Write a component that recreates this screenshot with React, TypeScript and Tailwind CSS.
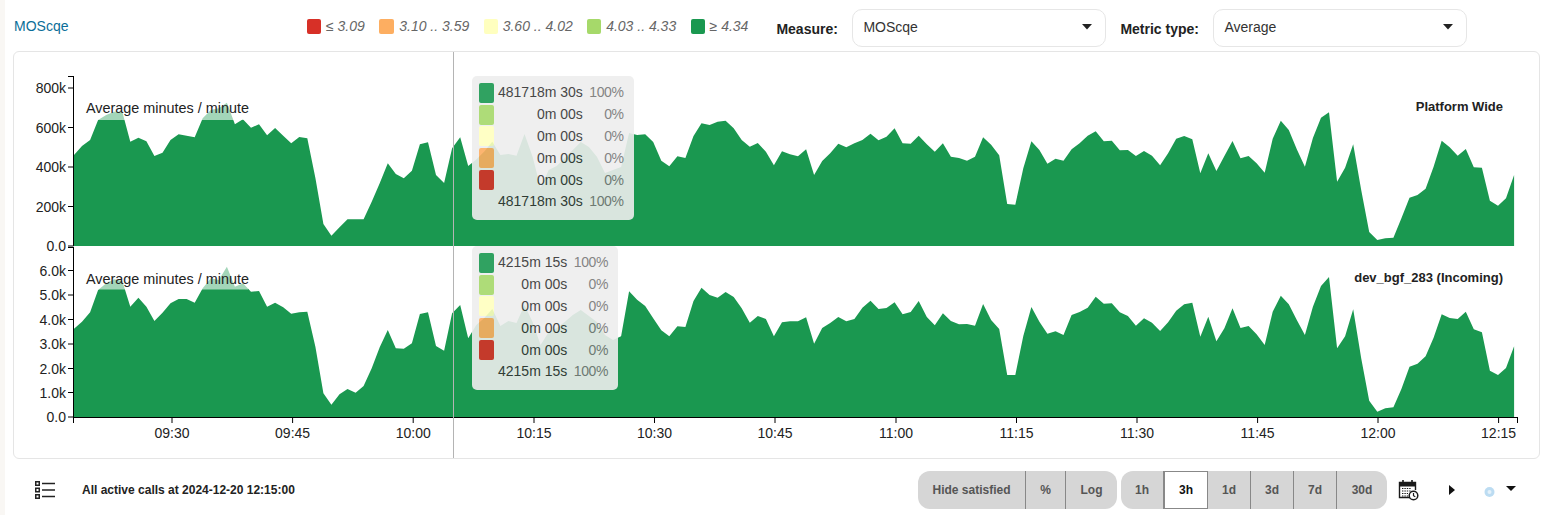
import React from 'react';

const STEP = 8.045;
const LEFT = 74;

// y positions of the samples, one per minute
const platformY = [
  155, 146, 140, 120, 115, 111.7, 111.7, 141.7, 137.7, 141.3, 156, 152.7, 140, 134.3, 135.7, 137.3, 118.3, 110, 108.3, 102.7,
  124.3, 119.3, 127.7, 124.3, 135.3, 128, 135.7, 143.3, 137, 138.3, 178, 224, 235.7, 227.3, 219.3, 219.3, 219.3, 201.7, 183.3, 163.3,
  174, 178.3, 170.7, 144.3, 142.3, 175, 183, 148.3, 137.3, 166, 159.5, 151.5, 141.7, 155, 154, 155.7, 134, 156.7, 188, 170,
  166, 158, 150, 142, 147, 156.7, 173, 170, 167, 133, 135, 134.3, 142, 160.7, 166.3, 156.3, 158, 136, 123.3, 125,
  121.7, 120.7, 128.3, 140, 146.7, 143, 151.7, 165.3, 151.3, 154.3, 156.3, 149.3, 175, 161, 153.3, 143.7, 147.3, 143.3, 140, 133.7,
  140.3, 136.7, 128.3, 143.3, 143.7, 135.7, 144.3, 151.7, 143.3, 156.7, 158, 160.7, 156.7, 137.3, 144.7, 155.3, 204, 204.7, 168.3, 141.3,
  150, 163.7, 158.7, 160.7, 149.3, 143.3, 135.7, 131.3, 141.3, 140.7, 150.3, 150, 156, 151, 155.7, 165.3, 153.3, 138.7, 136, 139.3,
  173.3, 153.3, 171, 156, 141, 158.3, 156, 163.3, 172.7, 138.7, 120.7, 130, 149.3, 166.7, 138, 117.7, 112.3, 181.7, 167.7, 144.3,
  190, 232, 240, 238.3, 237.7, 218.3, 197.7, 195, 188.7, 166.7, 140.7, 147.3, 155.7, 149, 167.3, 167.7, 200.7, 205.7, 198.3, 175,
];

const incomingY = [
  328.7, 321.7, 312.3, 290, 283.3, 279.3, 281, 306.7, 297.7, 306.7, 321, 312.7, 303.3, 299, 299, 302.7, 288.3, 278.3, 280, 266.7,
  286.7, 283.3, 291.7, 291, 306.7, 302.7, 307.3, 313.7, 312.3, 311.7, 346.7, 393.3, 404.7, 394.3, 389, 392.7, 386, 368.3, 347.3, 330,
  348.3, 348.7, 343.3, 314, 312.3, 346, 350.7, 313.3, 305, 338.3, 325, 318, 309, 326, 321, 323, 305, 322, 345, 332,
  328, 322, 315, 310, 316, 322, 335, 340, 336.3, 291.3, 299.7, 306, 318.3, 330.3, 336.3, 326.3, 327, 301, 287.7, 295,
  297.7, 292, 297, 308.3, 322.7, 316, 319, 336.3, 322.3, 321.3, 321.3, 317.3, 343.7, 328, 323, 317, 321.3, 319, 307.7, 300.7,
  309, 308, 302.3, 314.3, 312, 301, 317, 325.3, 313.3, 321, 324.3, 324, 325.7, 304, 320, 329, 375, 375, 336, 307,
  321.7, 333.7, 331.3, 335, 315, 312, 307.7, 296.7, 303.7, 303.3, 312.3, 316, 325.7, 318.3, 322.7, 331, 322.3, 310.7, 304.3, 302.7,
  336.7, 316.7, 341.3, 328.3, 308.3, 328, 326, 334.3, 345, 311.7, 295.7, 304.3, 320, 335, 306.7, 286, 277, 348.3, 336.3, 309.3,
  358.3, 400.7, 411.7, 408.3, 407.3, 389, 366.7, 363.7, 356.3, 337.7, 314.3, 318, 319, 311.7, 329.3, 332.3, 370.7, 375, 368, 346.3,
];

const timeTicks = [
  ['09:30', 172], ['09:45', 292.6], ['10:00', 413.2], ['10:15', 534], ['10:30', 654.5], ['10:45', 775],
  ['11:00', 896], ['11:15', 1016.5], ['11:30', 1137], ['11:45', 1257.6], ['12:00', 1378], ['12:15', 1498.6],
] as const;

const legend = [
  { label: '≤ 3.09', cls: 'w-[14px] bg-[#d73027]' },
  { label: '3.10 .. 3.59', cls: 'w-[15px] bg-[#fdae61]' },
  { label: '3.60 .. 4.02', cls: 'w-[14px] bg-[#ffffbf]' },
  { label: '4.03 .. 4.33', cls: 'w-[14px] bg-[#a6d96a]' },
  { label: '≥ 4.34', cls: 'w-[14px] bg-[#1a9850]' },
];

interface AreaChartProps {
  ys: number[];
  top: number;
  height: number;
  baseline: number;
  axisTop: number;
  ticks: [string, number][];
  title: string;
  titleY: number;
  unitY: number;
  bandY: number;
  bandH: number;
  withTimeAxis?: boolean;
}

// the svg uses page coordinates, so viewBox starts where the panel starts
function AreaChart({ ys, top, height, baseline, axisTop, ticks, title, titleY, unitY, bandY, bandH, withTimeAxis }: AreaChartProps) {
  const line = ys.map((y, i) => `${(LEFT + i * STEP).toFixed(1)},${y}`).join(' ');
  const area = `${LEFT},${baseline} ${line} ${(LEFT + (ys.length - 1) * STEP).toFixed(1)},${baseline}`;

  return (
    <svg className="block overflow-visible" width={1525} height={height} viewBox={`14 ${top} 1525 ${height}`} fontSize={14}>
      <polygon points={area} fill="#1a9850" />
      <rect x={86} y={bandY} width={162} height={bandH} fill="#fff" fillOpacity={0.6} />
      <text x={86} y={unitY + 5} fontSize={14.4} fill="#222">Average minutes / minute</text>
      <text x={1503} y={titleY} fontSize={13} fontWeight="bold" textAnchor="end" fill="#222">{title}</text>
      <line x1={73.5} x2={73.5} y1={axisTop} y2={withTimeAxis ? baseline + 6 : baseline} stroke="#000" />
      <line x1={68} x2={73.5} y1={axisTop + 0.5} y2={axisTop + 0.5} stroke="#000" />
      {ticks.map(([label, y]) => (
        <g key={label}>
          <line x1={68} x2={73.5} y1={y} y2={y} stroke="#000" />
          <text x={66} y={y + 5} textAnchor="end" fill="#222">{label}</text>
        </g>
      ))}
      {withTimeAxis && (
        <g>
          <line x1={73} x2={1517.5} y1={baseline + 0.5} y2={baseline + 0.5} stroke="#000" />
          <line x1={1517.5} x2={1517.5} y1={baseline} y2={baseline + 6} stroke="#000" />
          {timeTicks.map(([label, x]) => (
            <g key={label}>
              <line x1={x} x2={x} y1={baseline} y2={baseline + 6} stroke="#000" />
              <text x={x} y={baseline + 21} textAnchor="middle" fill="#222">{label}</text>
            </g>
          ))}
        </g>
      )}
    </svg>
  );
}

const swatches = ['bg-[#1a9850]', 'bg-[#a6d96a]', 'bg-[#ffffbf]', 'bg-[#fdae61]', 'bg-[#d73027]'];

function ChartTooltip({ total, className }: { total: string; className: string }) {
  const rows = [[total, '100%'], ['0m 00s', '0%'], ['0m 00s', '0%'], ['0m 00s', '0%'], ['0m 00s', '0%'], [total, '100%']];
  return (
    <div className={`absolute left-[458px] rounded-[5px] bg-[#eeeeee] opacity-90 pl-[7px] pr-[10px] pt-[6px] pb-[7px] text-[14px] ${className}`}>
      <div className="grid grid-cols-[15px_auto_auto] auto-rows-[21.8px] items-center">
        {rows.map(([amount, pct], i) => (
          <React.Fragment key={i}>
            {swatches[i] ? <div className={`h-[20px] w-[15px] rounded-[2px] ${swatches[i]}`} /> : <div />}
            <div className="pl-[4px] text-right text-[#333]">{amount}</div>
            <div className="pl-[6.5px] text-right tracking-[-0.4px] text-[#777]">{pct}</div>
          </React.Fragment>
        ))}
      </div>
    </div>
  );
}

function FakeSelect({ value }: { value: string }) {
  return (
    <div className="mt-[4px] flex h-[38px] w-[254px] items-center justify-between rounded-[10px] border border-[#e6e6e6] bg-white pl-[10px] pr-[12px] text-[14px] text-[#333]">
      <span>{value}</span>
      <svg width="10" height="6" viewBox="0 0 10 6" className="mb-[1px] mr-[1px]"><polygon points="0,0 10,0 5,5.5" fill="#222" /></svg>
    </div>
  );
}

function ToggleGroup({ items, active }: { items: [string, number][]; active?: string }) {
  return (
    <div className="flex h-[38px] overflow-hidden rounded-[12px] bg-[#d6d6d6] text-[12px] font-bold text-[#555]">
      {items.map(([label, w], i) => (
        <div
          key={label}
          style={{ width: w }}
          className={
            label === active
              ? 'flex items-center justify-center border border-[#888] bg-white text-[#111]'
              : `flex items-center justify-center ${i < items.length - 1 ? 'border-r border-[#888]' : ''}`
          }
        >
          {label}
        </div>
      ))}
    </div>
  );
}

export default function App() {
  return (
    <div className="flex h-[515px] w-[1542px] overflow-hidden bg-white font-['Liberation_Sans',Arial,sans-serif]">
      <div className="w-[5px] shrink-0 bg-[#f9f7f4]" />
      <div className="flex min-w-0 flex-1 flex-col">
        {/* Header */}
        <div className="flex h-[51px] items-center pl-[9px] text-[14px]">
          <div className="mt-[1px] w-[293px] text-[#0b6e99]">MOScqe</div>
          <div className="mt-[1px] flex items-center gap-[14.4px]">
            {legend.map((item) => (
              <div key={item.label} className="flex items-center gap-[5px]">
                <span className={`h-[15px] rounded-[2px] ${item.cls}`} />
                <span className="italic text-[#666]">{item.label}</span>
              </div>
            ))}
          </div>
          <div className="ml-[28px] mt-[7px] w-[76px] font-bold text-[#222]">Measure:</div>
          <FakeSelect value="MOScqe" />
          <div className="ml-[14px] mt-[7px] w-[93px] font-bold text-[#222]">Metric type:</div>
          <FakeSelect value="Average" />
        </div>

        {/* Charts */}
        <div className="relative ml-[8px] h-[408px] w-[1527px] rounded-[6px] border border-[#e5e5e5]">
          <AreaChart
            ys={platformY}
            top={52}
            height={195}
            baseline={246}
            axisTop={76}
            ticks={[['800k', 88], ['600k', 127.5], ['400k', 167], ['200k', 206.5], ['0.0', 246]]}
            title="Platform Wide"
            titleY={111}
            unitY={108}
            bandY={97}
            bandH={23}
          />
          <AreaChart
            ys={incomingY}
            top={247}
            height={211}
            baseline={417}
            axisTop={247}
            ticks={[['6.0k', 270.5], ['5.0k', 295], ['4.0k', 319.5], ['3.0k', 344], ['2.0k', 368.5], ['1.0k', 392.5], ['0.0', 417]]}
            title="dev_bgf_283 (Incoming)"
            titleY={282}
            unitY={279}
            bandY={266}
            bandH={23.5}
            withTimeAxis
          />
          <div className="absolute bottom-0 left-[439px] top-0 w-px bg-[#b4b4b4]" />
          <ChartTooltip total="481718m 30s" className="top-[24px]" />
          <ChartTooltip total="4215m 15s" className="top-[194px]" />
        </div>

        {/* Footer */}
        <div className="flex flex-1 items-center pt-[6px] pr-[26px]">
          <svg width="20" height="18" viewBox="0 0 20 18" className="ml-[30px]" fill="none" stroke="#222">
            <rect x="0.75" y="0.75" width="3.5" height="3.5" strokeWidth="1.5" />
            <rect x="0.75" y="7.25" width="3.5" height="3.5" strokeWidth="1.5" />
            <rect x="0.75" y="13.75" width="3.5" height="3.5" strokeWidth="1.5" />
            <path d="M7 2.5h13M7 9h13M7 15.5h13" strokeWidth="1.6" />
          </svg>
          <div className="ml-[27px] text-[12px] font-bold text-[#222]">All active calls at 2024-12-20 12:15:00</div>
          <div className="flex-1" />
          <div className="flex items-center gap-[4px]">
            <ToggleGroup items={[['Hide satisfied', 108], ['%', 40], ['Log', 51]]} />
            <ToggleGroup items={[['1h', 43], ['3h', 44], ['1d', 43], ['3d', 43], ['7d', 43], ['30d', 50]]} active="3h" />
          </div>
          <svg width="21" height="22" viewBox="0 0 21 22" className="ml-[11px]" fill="none" stroke="#1a1a1a">
            <path d="M14 18.5H1.5V3.5h16V11" strokeWidth="1.4" />
            <path d="M1.5 3.5h16v3.5h-16z" fill="#1a1a1a" strokeWidth="1" />
            <path d="M5 1v4M14 1v4" strokeWidth="1.6" />
            <path d="M4 9.5h9M4 12h9M4 14.5h6M4 17h6" strokeWidth="1.2" strokeDasharray="1.4 1" />
            <circle cx="15.5" cy="16.5" r="4.3" fill="#fff" strokeWidth="1.5" />
            <path d="M15.5 14v2.7l1.8 1" strokeWidth="1.2" />
          </svg>
          <svg width="6" height="10" viewBox="0 0 6 10" className="ml-[30px]"><polygon points="0,0 6,5 0,10" fill="#111" /></svg>
          <svg width="11" height="10" viewBox="0 0 11 10" className="ml-[29px] mt-[3px]">
            <circle cx="5.5" cy="5" r="5" fill="#bcdcf2" />
            <circle cx="5.5" cy="5" r="2" fill="#e4f1fa" />
          </svg>
          <svg width="10" height="5" viewBox="0 0 10 5" className="mb-[4px] ml-[11px]"><polygon points="0,0 10,0 5,5" fill="#111" /></svg>
        </div>
      </div>
    </div>
  );
}
